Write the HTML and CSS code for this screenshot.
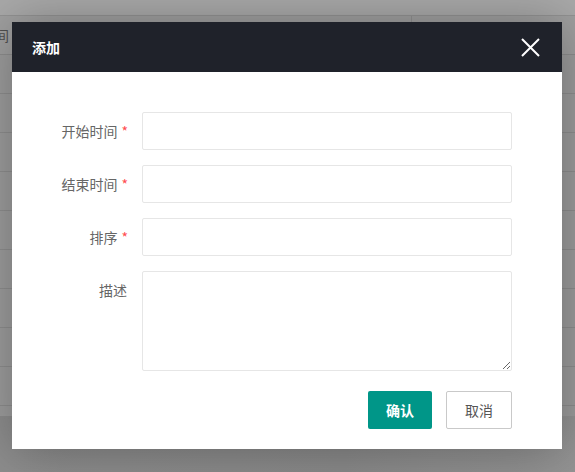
FILE: index.html
```html
<!DOCTYPE html>
<html lang="zh">
<head>
<meta charset="utf-8">
<title>添加</title>
<link rel="stylesheet" href="styles.css">
</head>
<body>
<div class="page">
  <div class="topband"></div>
  <div class="row head">
    <div class="cell-cut"><span>时间</span></div>
    <div class="col-div"></div>
  </div>
  <div class="row"></div>
  <div class="row"></div>
  <div class="row"></div>
  <div class="row"></div>
  <div class="row"></div>
  <div class="row"></div>
  <div class="row"></div>
  <div class="row"></div>
  <div class="row"></div>
  <div class="row last"></div>
</div>

<div class="modal">
  <div class="modal-head">
    <span class="modal-title">添加</span>
    <svg class="close" width="19" height="19" viewBox="0 0 19 19">
      <path d="M1 1 L18 18 M18 1 L1 18" stroke="#fff" stroke-width="2" fill="none"/>
    </svg>
  </div>
  <form class="modal-body">
    <div class="form-row">
      <label class="form-label">开始时间<span class="req">*</span></label>
      <input class="form-input" type="text">
    </div>
    <div class="form-row">
      <label class="form-label">结束时间<span class="req">*</span></label>
      <input class="form-input" type="text">
    </div>
    <div class="form-row">
      <label class="form-label">排序<span class="req">*</span></label>
      <input class="form-input" type="text">
    </div>
    <div class="form-row">
      <label class="form-label">描述</label>
      <textarea class="form-textarea"></textarea>
    </div>
    <div class="actions">
      <button type="button" class="btn btn-primary">确认</button>
      <button type="button" class="btn btn-default">取消</button>
    </div>
  </form>
</div>
</body>
</html>
```
FILE: styles.css
```css
html, body {
  margin: 0;
  padding: 0;
}
body {
  width: 575px;
  height: 472px;
  overflow: hidden;
  background: linear-gradient(90deg, #8d8d8d 0%, #8a8a8a 60%, #949494 100%);
  font-family: "Noto Sans CJK SC", "Noto Sans", sans-serif;
  position: relative;
}
.page {
  display: flex;
  flex-direction: column;
}
.topband {
  height: 15px;
  background: #a9a9a9;
  border-bottom: 1px solid #939393;
}
.row {
  height: 38px;
  background: #9d9d9d;
  border-bottom: 1px solid #8e8e8e;
  display: flex;
}
.row.head {
  background: #a0a0a0;
}
.row.last {
  height: 10px;
  border-bottom: none;
}
.cell-cut {
  width: 9px;
  overflow: hidden;
  display: flex;
  justify-content: flex-end;
  align-items: center;
  white-space: nowrap;
  font-size: 14px;
  color: #4f4f4f;
}
.cell-cut span {
  flex: none;
}
.col-div {
  margin-left: 402px;
  border-left: 1px solid #909090;
}

.modal {
  position: absolute;
  left: 12px;
  top: 22px;
  width: 550px;
  height: 427px;
  background: #fff;
  box-shadow: 1px 1px 50px rgba(0, 0, 0, 0.3);
  display: flex;
  flex-direction: column;
}
.modal-head {
  height: 50px;
  background: #1f222a;
  display: flex;
  align-items: center;
  justify-content: space-between;
  padding: 0 22px 0 20px;
  flex: none;
}
.modal-title {
  color: #fff;
  font-size: 14px;
  font-weight: 600;
}
.close {
  display: block;
}
.modal-body {
  margin: 0;
  padding: 40px 50px 20px 0;
  display: flex;
  flex-direction: column;
}
.form-row {
  display: flex;
  align-items: flex-start;
  margin-bottom: 15px;
}
.form-label {
  box-sizing: border-box;
  width: 130px;
  height: 38px;
  padding: 9px 15px 9px 0;
  text-align: right;
  font-size: 14px;
  line-height: 20px;
  color: #666;
  flex: none;
}
.req {
  color: #ff4d4f;
  font-size: 14px;
  line-height: 20px;
  margin-left: 4px;
  margin-right: -1px;
}
.form-input {
  box-sizing: border-box;
  width: 370px;
  height: 38px;
  border: 1px solid #e6e6e6;
  border-radius: 2px;
  margin: 0;
  padding: 0 10px;
  outline: none;
  font-size: 14px;
  font-family: inherit;
  display: block;
}
.form-textarea {
  box-sizing: border-box;
  width: 370px;
  height: 100px;
  border: 1px solid #e6e6e6;
  border-radius: 2px;
  margin: 0;
  padding: 6px 10px;
  outline: none;
  font-size: 14px;
  font-family: inherit;
  resize: both;
  display: block;
}
.actions {
  display: flex;
  justify-content: flex-end;
  gap: 14px;
  margin-top: 5px;
}
.btn {
  height: 38px;
  box-sizing: border-box;
  font-size: 14px;
  font-family: inherit;
  border-radius: 2px;
  cursor: pointer;
  line-height: 36px;
  margin: 0;
}
.btn-primary {
  background: #009688;
  border: none;
  color: #fff;
  font-weight: 600;
  width: 64px;
  padding: 0;
}
.btn-default {
  background: #fff;
  border: 1px solid #c9c9c9;
  color: #555;
  width: 66px;
  padding: 0;
}
```
